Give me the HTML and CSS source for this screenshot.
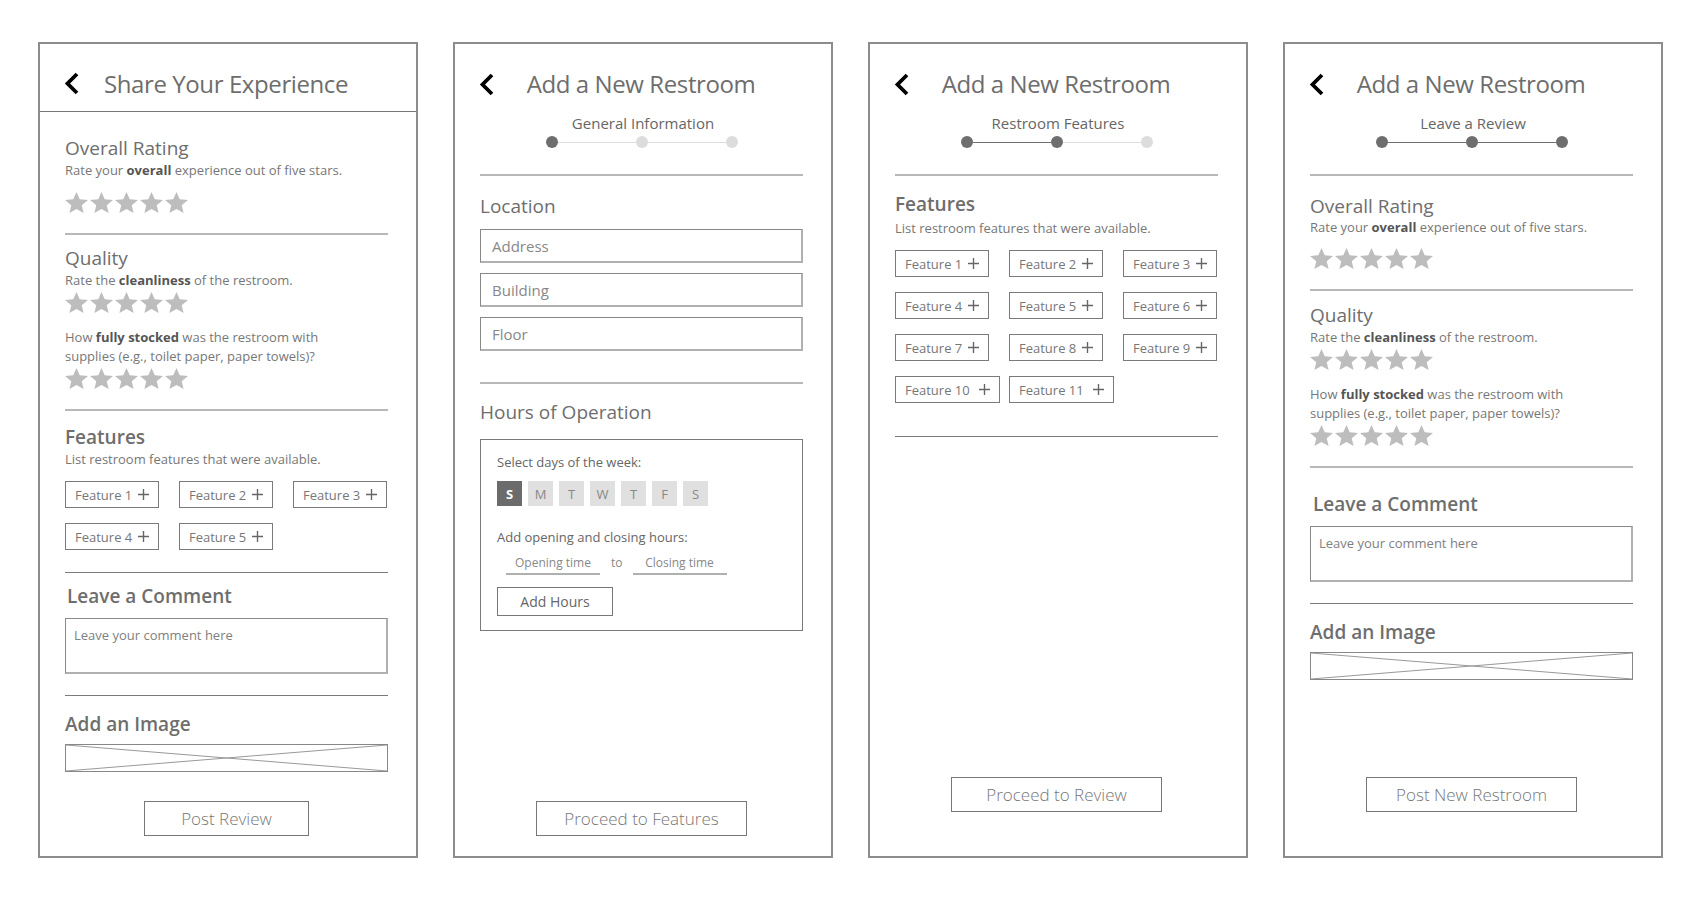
FILE: index.html
```html
<!DOCTYPE html>
<html>
<head>
    <meta charset="UTF-8">
    <title>Restroom Reviews - Wireframes</title>
    <meta name="viewport" content="width=device-width, initial-scale=1.0">
    <link rel="stylesheet" href="styles.css">
</head>
<body>
    <svg class="defs" width="0" height="0">
        <symbol id="star" viewBox="2 2 20 19" preserveAspectRatio="none">
            <path d="M12 17.27L18.18 21l-1.64-7.03L22 9.24l-7.19-.61L12 2 9.19 8.63 2 9.24l5.46 4.73L5.82 21z"/>
        </symbol>
        <symbol id="plus" viewBox="0 0 12 12">
            <path d="M6 0v12M0 6h12"/>
        </symbol>
        <symbol id="chevron" viewBox="0 0 15 23">
            <polyline points="13,2 3.5,11.5 13,21"/>
        </symbol>
    </svg>

    <div class="board">

        <!-- Screen 1: review -->
        <section class="screen">
            <header class="top lined">
                <svg class="back"><use href="#chevron"/></svg>
                <h1>Share Your Experience</h1>
            </header>
            <div class="content">
                <h2 class="h first">Overall Rating</h2>
                <p class="sub lead">Rate your <b>overall</b> experience out of five stars.</p>
                <svg class="stars" viewBox="0 0 125 21"><use href="#star" x="0" width="23" height="21"/><use href="#star" x="25" width="23" height="21"/><use href="#star" x="50" width="23" height="21"/><use href="#star" x="75" width="23" height="21"/><use href="#star" x="100" width="23" height="21"/></svg>
                <hr class="rule">
                <h2 class="h q-h">Quality</h2>
                <p class="sub">Rate the <b>cleanliness</b> of the restroom.</p>
                <svg class="stars" viewBox="0 0 125 21"><use href="#star" x="0" width="23" height="21"/><use href="#star" x="25" width="23" height="21"/><use href="#star" x="50" width="23" height="21"/><use href="#star" x="75" width="23" height="21"/><use href="#star" x="100" width="23" height="21"/></svg>
                <p class="sub question">How <b>fully stocked</b> was the restroom with<br>supplies (e.g., toilet paper, paper towels)?</p>
                <svg class="stars" viewBox="0 0 125 21"><use href="#star" x="0" width="23" height="21"/><use href="#star" x="25" width="23" height="21"/><use href="#star" x="50" width="23" height="21"/><use href="#star" x="75" width="23" height="21"/><use href="#star" x="100" width="23" height="21"/></svg>
                <hr class="rule">
                <h2 class="h semi">Features</h2>
                <p class="sub">List restroom features that were available.</p>
                <div class="chips">
                    <span class="chip">Feature 1 <svg><use href="#plus"/></svg></span>
                    <span class="chip">Feature 2 <svg><use href="#plus"/></svg></span>
                    <span class="chip">Feature 3 <svg><use href="#plus"/></svg></span>
                    <span class="chip">Feature 4 <svg><use href="#plus"/></svg></span>
                    <span class="chip">Feature 5 <svg><use href="#plus"/></svg></span>
                </div>
                <hr class="rule dark">
                <h2 class="h semi comment-h">Leave a Comment</h2>
                <div class="comment">Leave your comment here</div>
                <hr class="rule dark after-box">
                <h2 class="h semi img-h">Add an Image</h2>
                <div class="image">
                    <svg viewBox="0 0 100 100" preserveAspectRatio="none"><path d="M0 0L100 100M100 0L0 100"/></svg>
                </div>
            </div>
            <div class="foot">
                <button class="btn post">Post Review</button>
            </div>
        </section>

        <!-- Screen 2: general information -->
        <section class="screen">
            <header class="top">
                <svg class="back"><use href="#chevron"/></svg>
                <h1>Add a New Restroom</h1>
            </header>
            <p class="step-label">General Information</p>
            <div class="dots">
                <span class="dot on"></span><span class="link"></span><span class="dot"></span><span class="link"></span><span class="dot"></span>
            </div>
            <div class="content">
                <hr class="rule step-rule">
                <h2 class="h after-step">Location</h2>
                <div class="field first-field">Address</div>
                <div class="field">Building</div>
                <div class="field">Floor</div>
                <hr class="rule after-fields">
                <h2 class="h hours-h">Hours of Operation</h2>
                <div class="hours">
                    <p class="hours-label">Select days of the week:</p>
                    <div class="days">
                        <span class="day on">S</span>
                        <span class="day">M</span>
                        <span class="day">T</span>
                        <span class="day">W</span>
                        <span class="day">T</span>
                        <span class="day">F</span>
                        <span class="day">S</span>
                    </div>
                    <p class="hours-label second">Add opening and closing hours:</p>
                    <div class="times">
                        <span class="time">Opening time</span>
                        <span class="to">to</span>
                        <span class="time">Closing time</span>
                    </div>
                    <button class="add-hours">Add Hours</button>
                </div>
            </div>
            <div class="foot">
                <button class="btn wide">Proceed to Features</button>
            </div>
        </section>

        <!-- Screen 3: features -->
        <section class="screen">
            <header class="top">
                <svg class="back"><use href="#chevron"/></svg>
                <h1>Add a New Restroom</h1>
            </header>
            <p class="step-label">Restroom Features</p>
            <div class="dots">
                <span class="dot on"></span><span class="link on"></span><span class="dot on"></span><span class="link"></span><span class="dot"></span>
            </div>
            <div class="content">
                <hr class="rule step-rule">
                <h2 class="h semi features-h">Features</h2>
                <p class="sub">List restroom features that were available.</p>
                <div class="chips">
                    <span class="chip">Feature 1 <svg><use href="#plus"/></svg></span>
                    <span class="chip">Feature 2 <svg><use href="#plus"/></svg></span>
                    <span class="chip">Feature 3 <svg><use href="#plus"/></svg></span>
                    <span class="chip">Feature 4 <svg><use href="#plus"/></svg></span>
                    <span class="chip">Feature 5 <svg><use href="#plus"/></svg></span>
                    <span class="chip">Feature 6 <svg><use href="#plus"/></svg></span>
                    <span class="chip">Feature 7 <svg><use href="#plus"/></svg></span>
                    <span class="chip">Feature 8 <svg><use href="#plus"/></svg></span>
                    <span class="chip">Feature 9 <svg><use href="#plus"/></svg></span>
                    <span class="chip long">Feature 10 <svg><use href="#plus"/></svg></span>
                    <span class="chip long">Feature 11 <svg><use href="#plus"/></svg></span>
                </div>
                <hr class="rule dark after-chips">
            </div>
            <div class="foot high">
                <button class="btn wide">Proceed to Review</button>
            </div>
        </section>

        <!-- Screen 4: review step -->
        <section class="screen review">
            <header class="top">
                <svg class="back"><use href="#chevron"/></svg>
                <h1>Add a New Restroom</h1>
            </header>
            <p class="step-label">Leave a Review</p>
            <div class="dots">
                <span class="dot on"></span><span class="link on"></span><span class="dot on"></span><span class="link on"></span><span class="dot on"></span>
            </div>
            <div class="content">
                <hr class="rule step-rule">
                <h2 class="h after-step">Overall Rating</h2>
                <p class="sub lead">Rate your <b>overall</b> experience out of five stars.</p>
                <svg class="stars" viewBox="0 0 125 21"><use href="#star" x="0" width="23" height="21"/><use href="#star" x="25" width="23" height="21"/><use href="#star" x="50" width="23" height="21"/><use href="#star" x="75" width="23" height="21"/><use href="#star" x="100" width="23" height="21"/></svg>
                <hr class="rule">
                <h2 class="h q-h">Quality</h2>
                <p class="sub">Rate the <b>cleanliness</b> of the restroom.</p>
                <svg class="stars" viewBox="0 0 125 21"><use href="#star" x="0" width="23" height="21"/><use href="#star" x="25" width="23" height="21"/><use href="#star" x="50" width="23" height="21"/><use href="#star" x="75" width="23" height="21"/><use href="#star" x="100" width="23" height="21"/></svg>
                <p class="sub question">How <b>fully stocked</b> was the restroom with<br>supplies (e.g., toilet paper, paper towels)?</p>
                <svg class="stars" viewBox="0 0 125 21"><use href="#star" x="0" width="23" height="21"/><use href="#star" x="25" width="23" height="21"/><use href="#star" x="50" width="23" height="21"/><use href="#star" x="75" width="23" height="21"/><use href="#star" x="100" width="23" height="21"/></svg>
                <hr class="rule">
                <h2 class="h semi comment-h">Leave a Comment</h2>
                <div class="comment">Leave your comment here</div>
                <hr class="rule dark after-box">
                <h2 class="h semi img-h">Add an Image</h2>
                <div class="image">
                    <svg viewBox="0 0 100 100" preserveAspectRatio="none"><path d="M0 0L100 100M100 0L0 100"/></svg>
                </div>
            </div>
            <div class="foot high">
                <button class="btn wide">Post New Restroom</button>
            </div>
        </section>

    </div>
</body>
</html>
```

FILE: styles.css
```css
body {
    margin: 0;
    background: #fff;
    font-family: "Open Sans", "Noto Sans", sans-serif;
    color: #777;
}
.defs {
    position: absolute;
    width: 0;
    height: 0;
}
.board {
    display: flex;
    gap: 35px;
    padding: 42px 0 0 38px;
}
.screen {
    width: 380px;
    height: 816px;
    box-sizing: border-box;
    border: 2px solid #8c8c8c;
    display: flex;
    flex-direction: column;
}

/* header */
.top {
    display: grid;
    grid-template-columns: 1fr auto 1fr;
    align-items: center;
    box-sizing: border-box;
    height: 68px;
    padding: 12px 28px 0 24px;
}
.top.lined {
    border-bottom: 1px solid #777;
}
.back {
    grid-column: 1;
    grid-row: 1;
    width: 15px;
    height: 23px;
    fill: none;
    stroke: #000;
    stroke-width: 3.8;
}
.top h1 {
    grid-column: 2;
    grid-row: 1;
    margin: 0;
    font-size: 24px;
    line-height: 32px;
    letter-spacing: -0.4px;
    font-weight: 400;
    color: #6d6d6d;
    white-space: nowrap;
}

/* stepper */
.step-label {
    margin: 2px 0 0;
    text-align: center;
    font-size: 15px;
    line-height: 18px;
    font-weight: 500;
    color: #666;
}
.dots {
    display: flex;
    align-items: center;
    justify-content: center;
    margin-top: 4px;
    padding-right: 3px;
}
.dot {
    width: 12px;
    height: 12px;
    border-radius: 50%;
    background: #dcdcdc;
}
.dot.on {
    background: #6e6e6e;
}
.link {
    width: 78px;
    height: 1px;
    background: #dcdcdc;
}
.link.on {
    background: #6e6e6e;
}

/* content */
.content {
    padding: 0 28px 0 25px;
}
.foot {
    margin-top: auto;
    padding: 0 28px 20px 25px;
    display: flex;
    justify-content: center;
}
.foot.high {
    padding-bottom: 44px;
}
.h {
    margin: 15px 0 0;
    font-size: 19px;
    line-height: 22px;
    font-weight: 400;
    color: #6e6e6e;
}
.h.semi {
    font-weight: 600;
}
.h.first {
    margin-top: 25px;
}
.h.after-step {
    margin-top: 19px;
}
.h.q-h {
    margin-top: 12px;
}
.review .h.q-h {
    margin-top: 13px;
}
.h.comment-h {
    margin-top: 12px;
    padding-left: 2px;
}
.review .h.comment-h {
    margin-top: 25px;
    padding-left: 3px;
}
.h.img-h {
    margin-top: 17px;
}
.h.hours-h,
.h.features-h {
    margin-top: 17px;
}
.sub {
    margin: 3px 0 0;
    font-size: 13px;
    line-height: 16px;
    color: #777;
}
.sub b {
    color: #555;
    font-weight: 700;
}
.h.features-h + .sub {
    margin-top: 5px;
}
.sub.lead {
    margin-top: 3px;
}
.review .sub.lead {
    margin-top: 2px;
}
.sub.question {
    margin-top: 15px;
    line-height: 19px;
}
.stars {
    display: block;
    width: 125px;
    height: 21px;
    margin-top: 4px;
    fill: #bdbdbd;
}
.sub.lead + .stars {
    margin-top: 14px;
}
.review .sub.lead + .stars {
    margin-top: 13px;
}
.sub.question + .stars {
    margin-top: 2px;
}
.rule {
    border: 0;
    height: 2px;
    background: #b8b8b8;
    margin: 20px 0 0;
}
.rule.dark {
    height: 1px;
    background: #7a7a7a;
    margin-top: 22px;
}
.rule.after-box {
    margin-top: 21px;
}
.rule.step-rule {
    margin-top: 26px;
}
.rule.after-fields {
    margin-top: 31px;
}
.rule.after-chips {
    margin-top: 33px;
}

/* feature chips */
.chips {
    display: grid;
    grid-template-columns: repeat(3, 114px);
    row-gap: 15px;
    justify-items: start;
    margin-top: 14px;
}
.chip {
    display: inline-flex;
    align-items: center;
    gap: 6px;
    height: 27px;
    box-sizing: border-box;
    padding: 0 9px;
    border: 1px solid #7a7a7a;
    font-size: 13px;
    color: #777;
    white-space: nowrap;
}
.chip svg {
    width: 11px;
    height: 11px;
    fill: none;
    stroke: #666;
    stroke-width: 1.5;
}
.chip.long {
    gap: 9px;
}

/* comment + image */
.comment {
    margin-top: 11px;
    height: 56px;
    box-sizing: border-box;
    border: 1px solid #8a8a8a;
    border-right: 2px solid #b0b0b0;
    border-bottom: 2px solid #b0b0b0;
    padding: 8px 8px 0;
    font-size: 13px;
    line-height: 16px;
    color: #808080;
}
.review .comment {
    margin-top: 11px;
}
.image {
    margin-top: 9px;
    height: 28px;
    box-sizing: border-box;
    border: 1px solid #888;
}
.image svg {
    display: block;
    width: 100%;
    height: 100%;
    stroke: #999;
    stroke-width: 1;
}
.image path {
    vector-effect: non-scaling-stroke;
}

/* location fields */
.field {
    margin-top: 10px;
    height: 34px;
    box-sizing: border-box;
    border: 1px solid #888;
    border-right: 2px solid #b0b0b0;
    border-bottom: 2px solid #b0b0b0;
    padding-left: 11px;
    display: flex;
    align-items: center;
    font-size: 15px;
    color: #888;
}
.field.first-field {
    margin-top: 12px;
}

/* hours box */
.hours {
    margin-top: 16px;
    height: 192px;
    box-sizing: border-box;
    border: 1px solid #7a7a7a;
    padding: 13px 16px 0;
}
.hours-label {
    margin: 0;
    font-size: 13px;
    line-height: 18px;
    font-weight: 500;
    color: #666;
}
.hours-label.second {
    margin-top: 22px;
}
.days {
    display: flex;
    gap: 6px;
    margin-top: 10px;
}
.day {
    width: 25px;
    height: 25px;
    display: flex;
    align-items: center;
    justify-content: center;
    background: #e0e0e0;
    font-size: 13px;
    color: #888;
}
.day.on {
    background: #6b6b6b;
    color: #fff;
    font-weight: 700;
}
.times {
    display: flex;
    align-items: flex-end;
    margin-top: 9px;
    padding-left: 9px;
    font-size: 12px;
    color: #888;
}
.time {
    width: 94px;
    text-align: center;
    line-height: 16px;
    padding-bottom: 2px;
    border-bottom: 2px solid #b0b0b0;
}
.to {
    margin: 0 10px 0 11px;
    line-height: 16px;
    padding-bottom: 4px;
}
.add-hours {
    display: block;
    margin-top: 12px;
    width: 116px;
    height: 29px;
    background: #fff;
    border: 1px solid #777;
    font-family: inherit;
    font-size: 14px;
    font-weight: 500;
    color: #666;
}

/* buttons */
.btn {
    height: 35px;
    padding: 0;
    background: #fff;
    border: 1px solid #777;
    font-family: inherit;
    font-size: 17px;
    font-weight: 300;
    color: #777;
}
.btn.post {
    width: 165px;
}
.btn.wide {
    width: 211px;
}
```
